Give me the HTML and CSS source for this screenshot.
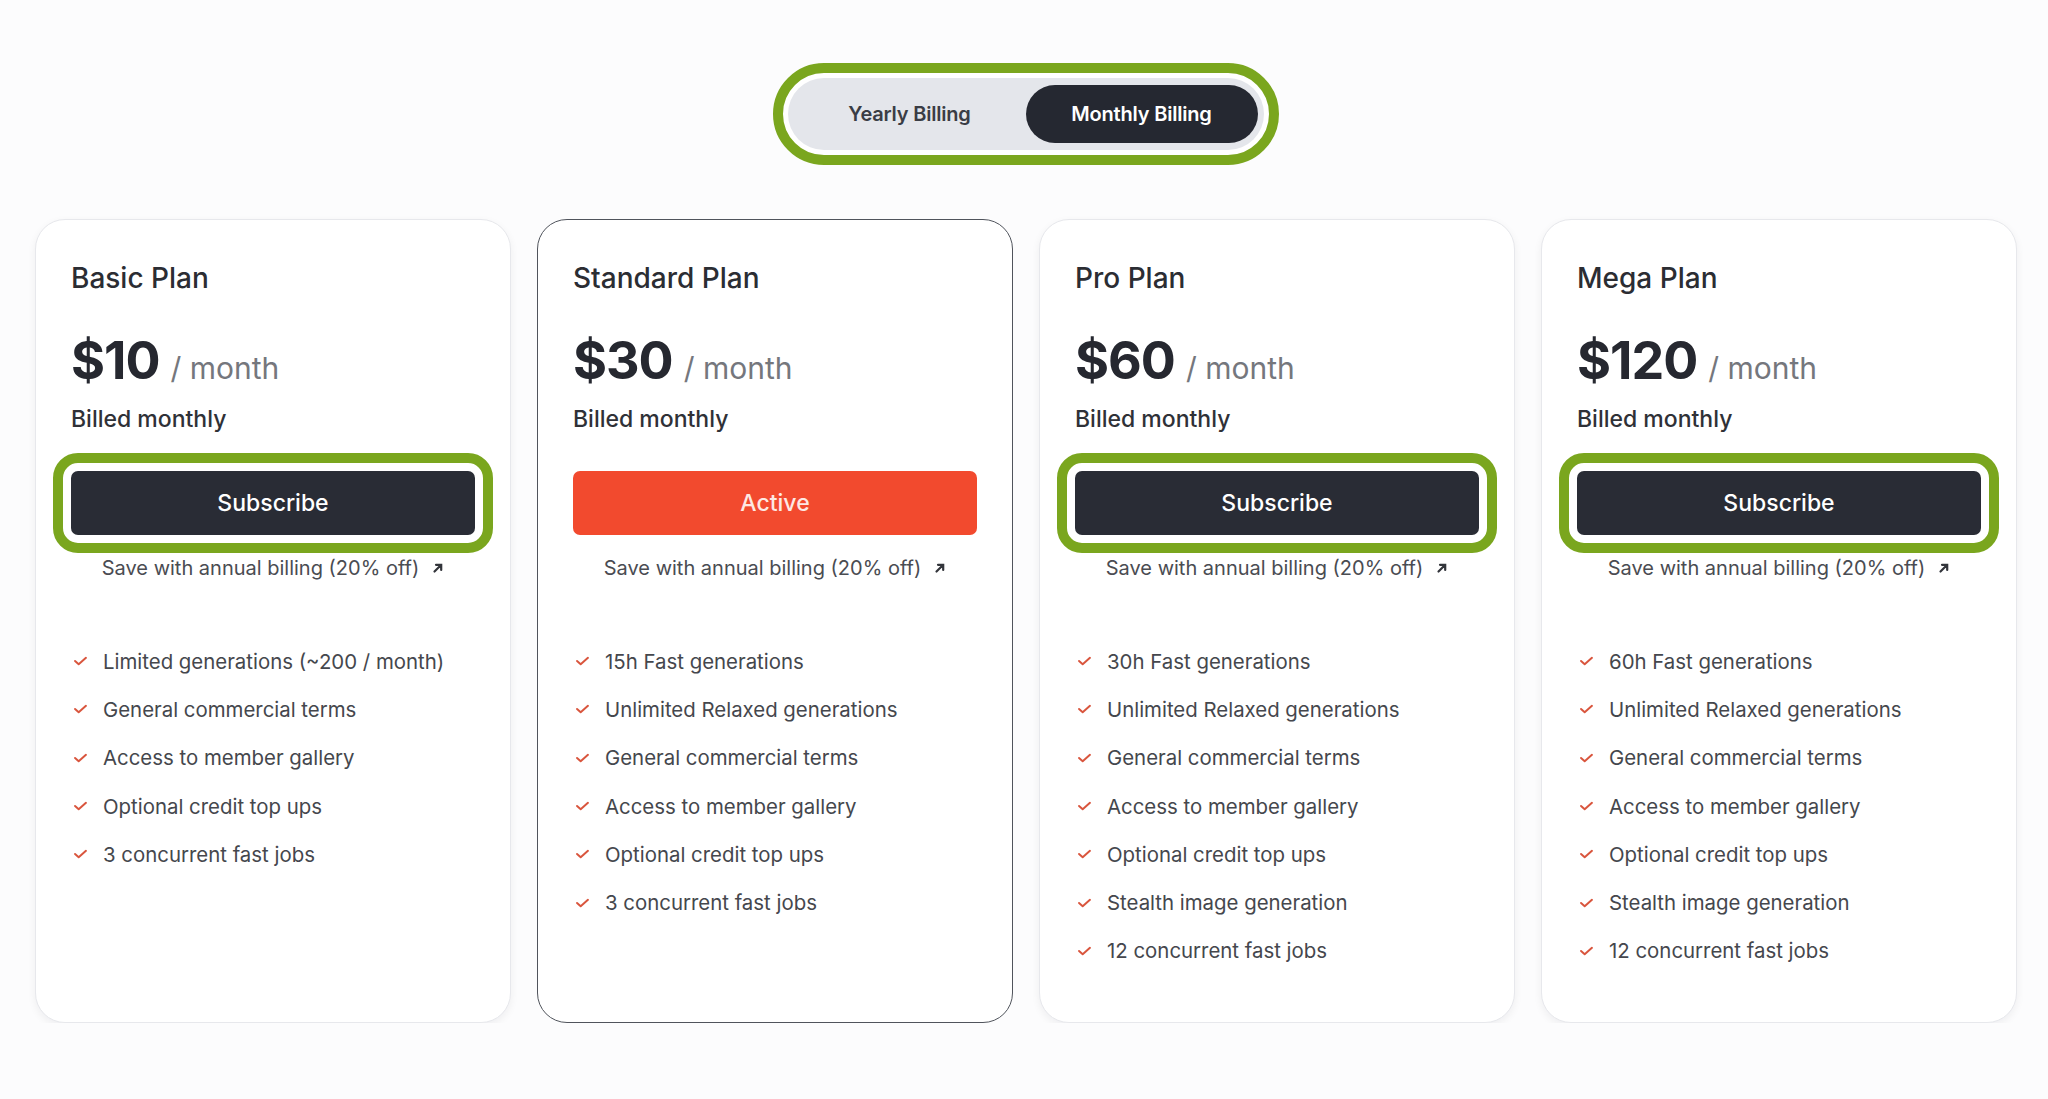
FILE: index.html
```html
<!DOCTYPE html>
<html lang="en">
<head>
<meta charset="utf-8">
<title>Pricing</title>
<link rel="stylesheet" href="styles.css">
</head>
<body>
<main class="page">
  <div class="toggle-row">
    <div class="toggle-ring">
      <div class="toggle">
        <button class="toggle-opt">Yearly Billing</button>
        <button class="toggle-opt is-on">Monthly Billing</button>
      </div>
    </div>
  </div>

  <section class="cards">
    <article class="card">
      <h2 class="plan-name">Basic Plan</h2>
      <div class="price"><span class="amount">$10</span><span class="per">/ month</span></div>
      <p class="billed">Billed monthly</p>
      <button class="cta cta-dark ring">Subscribe</button>
      <a class="save">Save with annual billing (20% off)<svg class="arrow" viewBox="0 0 12 12"><path d="M2.5 9.5 L9 3 M4 2.8 H9.2 V8" /></svg></a>
      <ul class="features">
        <li><svg class="check" viewBox="0 0 16 11"><path d="M2 5.5 L6 9 L14 2"/></svg>Limited generations (~200 / month)</li>
        <li><svg class="check" viewBox="0 0 16 11"><path d="M2 5.5 L6 9 L14 2"/></svg>General commercial terms</li>
        <li><svg class="check" viewBox="0 0 16 11"><path d="M2 5.5 L6 9 L14 2"/></svg>Access to member gallery</li>
        <li><svg class="check" viewBox="0 0 16 11"><path d="M2 5.5 L6 9 L14 2"/></svg>Optional credit top ups</li>
        <li><svg class="check" viewBox="0 0 16 11"><path d="M2 5.5 L6 9 L14 2"/></svg>3 concurrent fast jobs</li>
      </ul>
    </article>

    <article class="card card-current">
      <h2 class="plan-name">Standard Plan</h2>
      <div class="price"><span class="amount">$30</span><span class="per">/ month</span></div>
      <p class="billed">Billed monthly</p>
      <button class="cta cta-active">Active</button>
      <a class="save">Save with annual billing (20% off)<svg class="arrow" viewBox="0 0 12 12"><path d="M2.5 9.5 L9 3 M4 2.8 H9.2 V8" /></svg></a>
      <ul class="features">
        <li><svg class="check" viewBox="0 0 16 11"><path d="M2 5.5 L6 9 L14 2"/></svg>15h Fast generations</li>
        <li><svg class="check" viewBox="0 0 16 11"><path d="M2 5.5 L6 9 L14 2"/></svg>Unlimited Relaxed generations</li>
        <li><svg class="check" viewBox="0 0 16 11"><path d="M2 5.5 L6 9 L14 2"/></svg>General commercial terms</li>
        <li><svg class="check" viewBox="0 0 16 11"><path d="M2 5.5 L6 9 L14 2"/></svg>Access to member gallery</li>
        <li><svg class="check" viewBox="0 0 16 11"><path d="M2 5.5 L6 9 L14 2"/></svg>Optional credit top ups</li>
        <li><svg class="check" viewBox="0 0 16 11"><path d="M2 5.5 L6 9 L14 2"/></svg>3 concurrent fast jobs</li>
      </ul>
    </article>

    <article class="card">
      <h2 class="plan-name">Pro Plan</h2>
      <div class="price"><span class="amount">$60</span><span class="per">/ month</span></div>
      <p class="billed">Billed monthly</p>
      <button class="cta cta-dark ring">Subscribe</button>
      <a class="save">Save with annual billing (20% off)<svg class="arrow" viewBox="0 0 12 12"><path d="M2.5 9.5 L9 3 M4 2.8 H9.2 V8" /></svg></a>
      <ul class="features">
        <li><svg class="check" viewBox="0 0 16 11"><path d="M2 5.5 L6 9 L14 2"/></svg>30h Fast generations</li>
        <li><svg class="check" viewBox="0 0 16 11"><path d="M2 5.5 L6 9 L14 2"/></svg>Unlimited Relaxed generations</li>
        <li><svg class="check" viewBox="0 0 16 11"><path d="M2 5.5 L6 9 L14 2"/></svg>General commercial terms</li>
        <li><svg class="check" viewBox="0 0 16 11"><path d="M2 5.5 L6 9 L14 2"/></svg>Access to member gallery</li>
        <li><svg class="check" viewBox="0 0 16 11"><path d="M2 5.5 L6 9 L14 2"/></svg>Optional credit top ups</li>
        <li><svg class="check" viewBox="0 0 16 11"><path d="M2 5.5 L6 9 L14 2"/></svg>Stealth image generation</li>
        <li><svg class="check" viewBox="0 0 16 11"><path d="M2 5.5 L6 9 L14 2"/></svg>12 concurrent fast jobs</li>
      </ul>
    </article>

    <article class="card">
      <h2 class="plan-name">Mega Plan</h2>
      <div class="price"><span class="amount">$120</span><span class="per">/ month</span></div>
      <p class="billed">Billed monthly</p>
      <button class="cta cta-dark ring">Subscribe</button>
      <a class="save">Save with annual billing (20% off)<svg class="arrow" viewBox="0 0 12 12"><path d="M2.5 9.5 L9 3 M4 2.8 H9.2 V8" /></svg></a>
      <ul class="features">
        <li><svg class="check" viewBox="0 0 16 11"><path d="M2 5.5 L6 9 L14 2"/></svg>60h Fast generations</li>
        <li><svg class="check" viewBox="0 0 16 11"><path d="M2 5.5 L6 9 L14 2"/></svg>Unlimited Relaxed generations</li>
        <li><svg class="check" viewBox="0 0 16 11"><path d="M2 5.5 L6 9 L14 2"/></svg>General commercial terms</li>
        <li><svg class="check" viewBox="0 0 16 11"><path d="M2 5.5 L6 9 L14 2"/></svg>Access to member gallery</li>
        <li><svg class="check" viewBox="0 0 16 11"><path d="M2 5.5 L6 9 L14 2"/></svg>Optional credit top ups</li>
        <li><svg class="check" viewBox="0 0 16 11"><path d="M2 5.5 L6 9 L14 2"/></svg>Stealth image generation</li>
        <li><svg class="check" viewBox="0 0 16 11"><path d="M2 5.5 L6 9 L14 2"/></svg>12 concurrent fast jobs</li>
      </ul>
    </article>
  </section>
</main>
</body>
</html>
```

FILE: styles.css
```css
* { box-sizing: border-box; }

html, body {
  margin: 0;
  padding: 0;
  background: #fcfcfd;
  font-family: Inter, "Noto Sans", "Liberation Sans", sans-serif;
  color: #2b2d33;
}

.page {
  padding-top: 63px;
}

.toggle-row {
  display: flex;
  justify-content: center;
  padding-left: 3px;
}

.toggle-ring {
  border: 10px solid #7aa61e;
  border-radius: 999px;
  padding: 5px;
  background: #ffffff;
}

.toggle {
  display: flex;
  background: #e4e6eb;
  border-radius: 999px;
  padding: 7px 6px;
}

.toggle-opt {
  width: 232px;
  height: 58px;
  border: none;
  border-radius: 999px;
  background: transparent;
  font-family: inherit;
  font-size: 20px;
  font-weight: 600;
  color: #3a3d45;
  letter-spacing: -0.2px;
}

.toggle-opt.is-on {
  background: #252831;
  color: #ffffff;
}

.cards {
  display: flex;
  gap: 26px;
  padding-left: 35px;
  margin-top: 54px;
}

.card {
  width: 476px;
  height: 804px;
  background: #ffffff;
  border: 1px solid #e7e8ec;
  border-radius: 30px;
  box-shadow: 0 3px 8px rgba(20, 24, 40, 0.06);
  padding: 41px 35px 0;
  display: flex;
  flex-direction: column;
}

.card-current {
  border: 1.5px solid #50545c;
  box-shadow: none;
}

.plan-name {
  margin: 0;
  font-size: 28px;
  line-height: 34px;
  font-weight: 500;
  color: #2b2d33;
  letter-spacing: 0;
}

.price {
  margin-top: 36px;
  display: flex;
  align-items: baseline;
  line-height: 60px;
  height: 60px;
}

.amount {
  font-size: 52px;
  font-weight: 700;
  color: #262830;
  letter-spacing: -1px;
}

.per {
  margin-left: 11px;
  font-size: 30px;
  font-weight: 400;
  color: #75777d;
}

.billed {
  margin: 14px 0 0;
  font-size: 23px;
  line-height: 28px;
  font-weight: 500;
  color: #2f3137;
}

.cta {
  margin-top: 38px;
  height: 64px;
  width: 100%;
  border: none;
  border-radius: 7px;
  font-family: inherit;
  font-size: 23px;
  font-weight: 500;
  color: #ffffff;
}

.cta-dark {
  background: #292c35;
}

.cta-active {
  background: #f24a2e;
  color: #fde8e3;
}

.ring {
  outline: 10px solid #7aa61e;
  outline-offset: 8px;
}

.save {
  margin-top: 21px;
  display: flex;
  justify-content: center;
  align-items: center;
  gap: 13px;
  font-size: 20px;
  line-height: 24px;
  color: #4a4c52;
}

.arrow {
  width: 12px;
  height: 12px;
  fill: none;
  stroke: #33353b;
  stroke-width: 2.2;
  stroke-linecap: round;
}

.features {
  list-style: none;
  margin: 57px 0 0;
  padding: 0;
}

.features li {
  display: flex;
  align-items: center;
  height: 48.3px;
  font-size: 20.4px;
  color: #45474d;
}

.check {
  width: 15px;
  height: 10px;
  margin-left: 2px;
  margin-right: 15px;
  fill: none;
  stroke: #d9553d;
  stroke-width: 2.2;
  stroke-linecap: round;
  stroke-linejoin: round;
}
```
